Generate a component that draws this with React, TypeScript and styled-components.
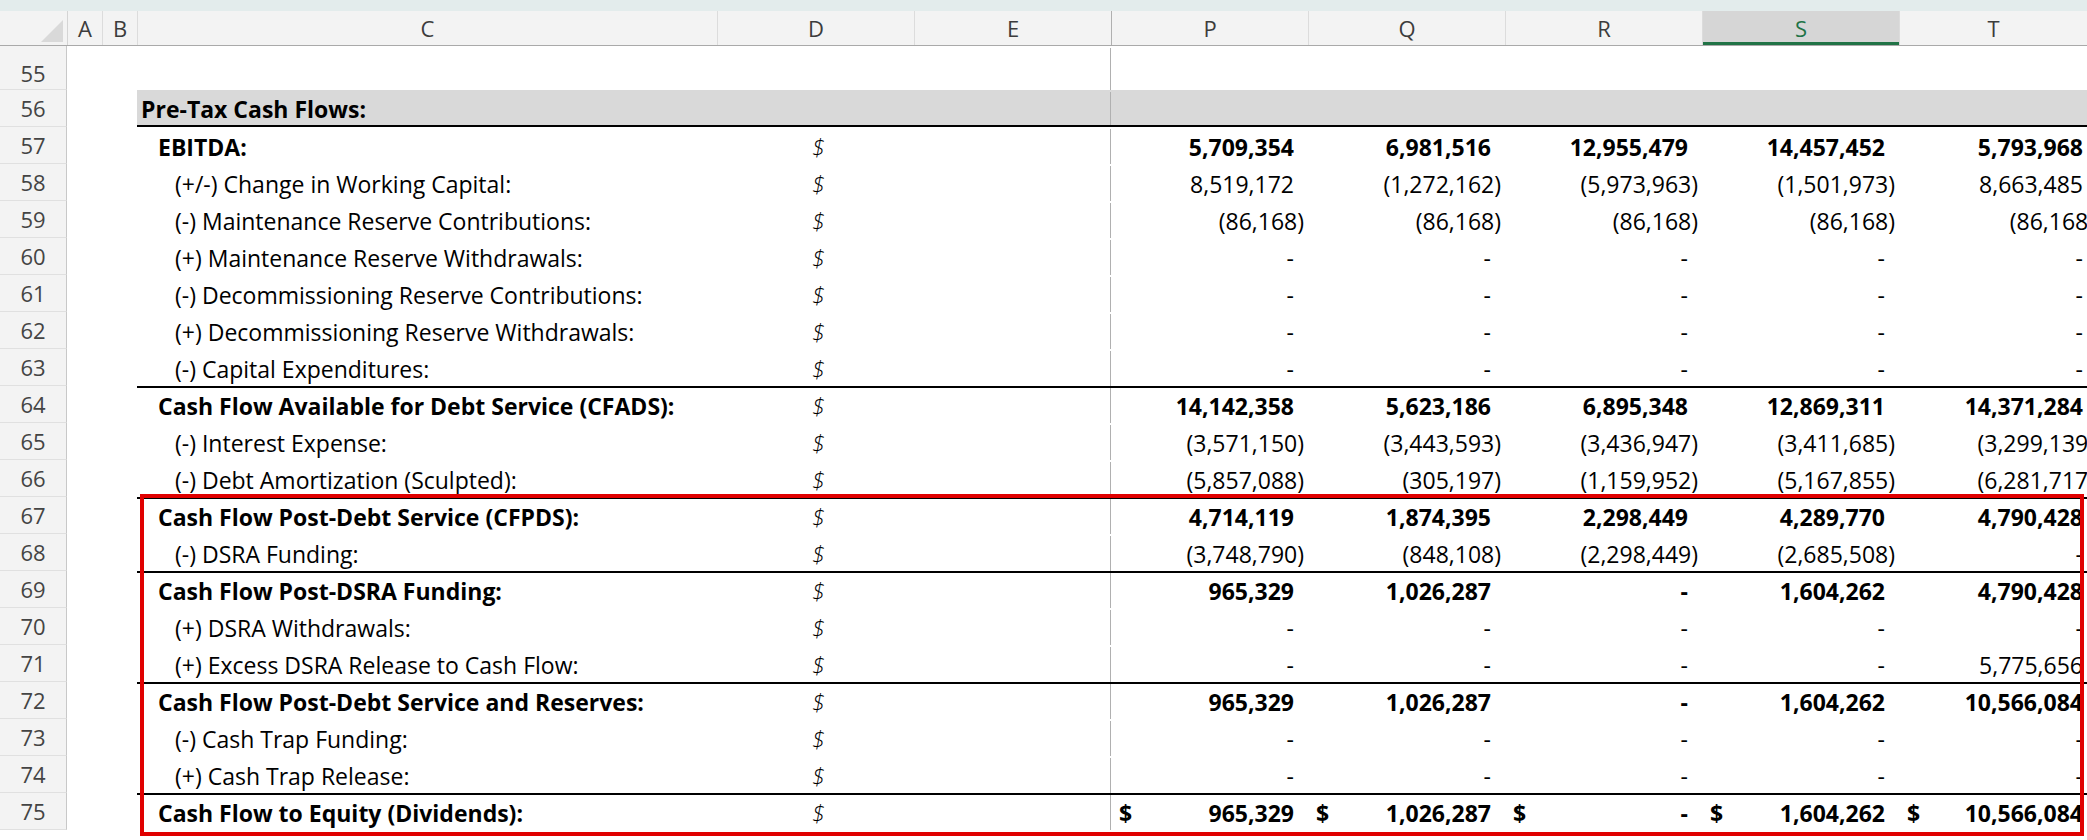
import React from "react";
import styled, { createGlobalStyle } from "styled-components";

const Global = createGlobalStyle`
  html, body { margin: 0; padding: 0; background: #fff; overflow: hidden; }
  body { font-family: "Open Sans", "Liberation Sans", sans-serif; }
`;

const COLS = "35px 35px 580px 197px 197px 197px 197px 197px 197px 188px";
const ROWH = 37;

const Sheet = styled.div`
  width: 2087px;
  height: 840px;
  overflow: hidden;
  position: relative;
  background: #fff;
`;
const TopStrip = styled.div`
  height: 11px;
  background: #e3ecec;
`;
const HeaderRow = styled.div`
  display: flex;
  height: 34px;
  background: #f3f3f3;
  border-bottom: 1px solid #a9a9a9;
`;
const Corner = styled.div`
  width: 67px;
  flex: none;
  position: relative;
  border-right: 1px solid #d4d4d4;
  &::after {
    content: "";
    position: absolute;
    right: 4px;
    bottom: 3px;
    border-left: 22px solid transparent;
    border-bottom: 22px solid #d9d9d9;
  }
`;
const ColHeads = styled.div`
  display: grid;
  grid-template-columns: ${COLS};
`;
const ColHead = styled.div<{ $sel?: boolean; $freeze?: boolean }>`
  display: flex;
  align-items: center;
  justify-content: center;
  font-size: 22px;
  border-right: 1px solid ${(p) => (p.$freeze ? "#b0b0b0" : "#dcdcdc")};
  background: ${(p) => (p.$sel ? "#d6d6d6" : "transparent")};
  color: ${(p) => (p.$sel ? "#217346" : "#3c3c3c")};
  box-shadow: ${(p) => (p.$sel ? "inset 0 -3px 0 #217346" : "none")};
`;
const Row = styled.div<{ $h: number }>`
  display: flex;
  height: ${(p) => p.$h}px;
`;
const RowNum = styled.div`
  width: 67px;
  flex: none;
  background: #f3f3f3;
  border-right: 1px solid #c8c8c8;
  border-bottom: 1px solid #e0e0e0;
  box-sizing: border-box;
  display: flex;
  align-items: center;
  justify-content: center;
  font-size: 22px;
  color: #444;
`;
const Cells = styled.div`
  display: grid;
  grid-template-columns: ${COLS};
`;
const Spacer = styled.div``;
const Body = styled.div<{ $top?: boolean; $title?: boolean }>`
  grid-column: 3 / 11;
  display: grid;
  grid-template-columns: 580px 197px 197px 197px 197px 197px 197px 188px;
  border-top: ${(p) => (p.$top ? "2px solid #000" : "2px solid transparent")};
  border-bottom: ${(p) => (p.$title ? "2px solid #000" : "0")};
  background: ${(p) => (p.$title ? "#d9d9d9" : "transparent")};
  box-sizing: border-box;
  font-size: 23px;
  color: #000;
`;
const Label = styled.div<{ $kind: string }>`
  display: flex;
  align-items: center;
  white-space: nowrap;
  font-weight: ${(p) => (p.$kind === "sub" ? 400 : 700)};
  padding-left: ${(p) => (p.$kind === "title" ? 4 : p.$kind === "bold" ? 21 : 38)}px;
`;
const Dollar = styled.div`
  display: flex;
  align-items: center;
  padding-left: 95px;
  font-style: italic;
  font-weight: 300;
`;
const Empty = styled.div<{ $freeze?: boolean }>`
  border-right: ${(p) => (p.$freeze ? "1px solid #b0b0b0" : "none")};
`;
const Num = styled.div<{ $bold?: boolean }>`
  display: flex;
  align-items: center;
  justify-content: space-between;
  white-space: nowrap;
  overflow: hidden;
  font-weight: ${(p) => (p.$bold ? 700 : 400)};
  padding-left: 8px;
`;
const Val = styled.span<{ $pad: number }>`
  margin-right: ${(p) => p.$pad}px;
`;
const Highlight = styled.div`
  position: absolute;
  left: 140px;
  top: 494px;
  width: 1944px;
  height: 342px;
  border: 4px solid #e00000;
  box-sizing: border-box;
  pointer-events: none;
`;

type R = { n: number; label?: string; kind: "sub" | "bold" | "title"; vals?: string[]; top?: boolean; usd?: boolean };
const D = ["-", "-", "-", "-", "-"];
const rows: R[] = [
  { n: 56, label: "Pre-Tax Cash Flows:", kind: "title" },
  { n: 57, label: "EBITDA:", kind: "bold", vals: ["5,709,354", "6,981,516", "12,955,479", "14,457,452", "5,793,968"] },
  { n: 58, label: "(+/-) Change in Working Capital:", kind: "sub", vals: ["8,519,172", "(1,272,162)", "(5,973,963)", "(1,501,973)", "8,663,485"] },
  { n: 59, label: "(-) Maintenance Reserve Contributions:", kind: "sub", vals: ["(86,168)", "(86,168)", "(86,168)", "(86,168)", "(86,168)"] },
  { n: 60, label: "(+) Maintenance Reserve Withdrawals:", kind: "sub", vals: D },
  { n: 61, label: "(-) Decommissioning Reserve Contributions:", kind: "sub", vals: D },
  { n: 62, label: "(+) Decommissioning Reserve Withdrawals:", kind: "sub", vals: D },
  { n: 63, label: "(-) Capital Expenditures:", kind: "sub", vals: D },
  { n: 64, label: "Cash Flow Available for Debt Service (CFADS):", kind: "bold", vals: ["14,142,358", "5,623,186", "6,895,348", "12,869,311", "14,371,284"], top: true },
  { n: 65, label: "(-) Interest Expense:", kind: "sub", vals: ["(3,571,150)", "(3,443,593)", "(3,436,947)", "(3,411,685)", "(3,299,139)"] },
  { n: 66, label: "(-) Debt Amortization (Sculpted):", kind: "sub", vals: ["(5,857,088)", "(305,197)", "(1,159,952)", "(5,167,855)", "(6,281,717)"] },
  { n: 67, label: "Cash Flow Post-Debt Service (CFPDS):", kind: "bold", vals: ["4,714,119", "1,874,395", "2,298,449", "4,289,770", "4,790,428"], top: true },
  { n: 68, label: "(-) DSRA Funding:", kind: "sub", vals: ["(3,748,790)", "(848,108)", "(2,298,449)", "(2,685,508)", "-"] },
  { n: 69, label: "Cash Flow Post-DSRA Funding:", kind: "bold", vals: ["965,329", "1,026,287", "-", "1,604,262", "4,790,428"], top: true },
  { n: 70, label: "(+) DSRA Withdrawals:", kind: "sub", vals: D },
  { n: 71, label: "(+) Excess DSRA Release to Cash Flow:", kind: "sub", vals: ["-", "-", "-", "-", "5,775,656"] },
  { n: 72, label: "Cash Flow Post-Debt Service and Reserves:", kind: "bold", vals: ["965,329", "1,026,287", "-", "1,604,262", "10,566,084"], top: true },
  { n: 73, label: "(-) Cash Trap Funding:", kind: "sub", vals: D },
  { n: 74, label: "(+) Cash Trap Release:", kind: "sub", vals: D },
  { n: 75, label: "Cash Flow to Equity (Dividends):", kind: "bold", vals: ["965,329", "1,026,287", "-", "1,604,262", "10,566,084"], top: true, usd: true },
];

const pad = (v: string, i: number) => {
  const neg = v.startsWith("(");
  if (i === 4) return neg ? -8 : 4;
  return neg ? 4 : 14;
};

export default function App() {
  const heads = ["A", "B", "C", "D", "E", "P", "Q", "R", "S", "T"];
  return (
    <Sheet>
      <Global />
      <TopStrip />
      <HeaderRow>
        <Corner />
        <ColHeads>
          {heads.map((h) => (
            <ColHead key={h} $sel={h === "S"} $freeze={h === "E"}>{h}</ColHead>
          ))}
        </ColHeads>
      </HeaderRow>
      <Row $h={44}>
        <RowNum style={{ paddingTop: 10 }}>55</RowNum>
        <Cells>
          <Spacer /><Spacer />
          <Body><Empty /><Empty /><Empty $freeze /></Body>
        </Cells>
      </Row>
      {rows.map((r) => (
        <Row key={r.n} $h={ROWH}>
          <RowNum>{r.n}</RowNum>
          <Cells>
            <Spacer /><Spacer />
            <Body $top={r.top} $title={r.kind === "title"}>
              <Label $kind={r.kind}>{r.label}</Label>
              {r.kind === "title" ? <Empty /> : <Dollar>$</Dollar>}
              <Empty $freeze />
              {(r.vals || []).map((v, i) => (
                <Num key={i} $bold={r.kind === "bold"}>
                  <span>{r.usd ? "$" : ""}</span>
                  <Val $pad={pad(v, i)}>{v}</Val>
                </Num>
              ))}
            </Body>
          </Cells>
        </Row>
      ))}
      <Highlight />
    </Sheet>
  );
}
